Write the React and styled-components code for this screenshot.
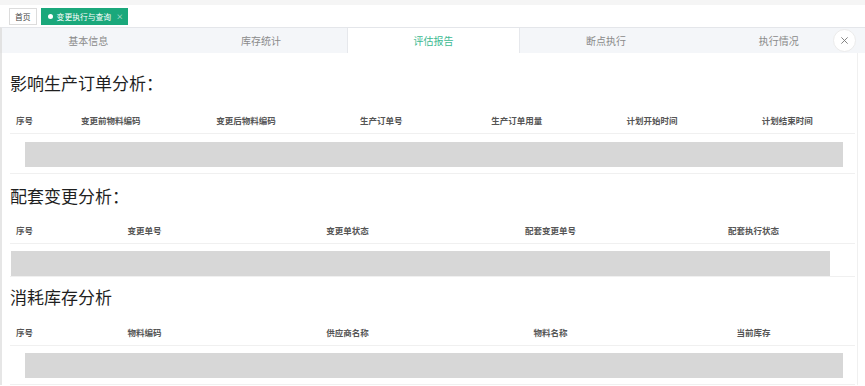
import React from 'react';
import styled, { createGlobalStyle } from 'styled-components';

const GlobalStyle = createGlobalStyle`
  body {
    margin: 0;
    background: #fff;
    font-family: "Noto Sans CJK SC", "Noto Sans", sans-serif;
  }
`;

const TopStrip = styled.div`
  height: 5px;
  background: #f5f5f5;
`;

const TagBar = styled.div`
  display: flex;
  align-items: center;
  gap: 4px;
  height: 22px;
  padding-left: 9px;
  background: #fff;
`;

const Tag = styled.div`
  display: flex;
  align-items: center;
  gap: 4px;
  height: 17px;
  box-sizing: border-box;
  padding: 0 ${({ active }) => (active ? '4px 0 6px' : '5px')};
  font-size: 7.8px;
  color: ${({ active }) => (active ? '#fff' : '#444')};
  background: ${({ active }) => (active ? '#1aa87b' : '#fff')};
  border: 1px solid ${({ active }) => (active ? '#1aa87b' : '#dcdcdc')};
`;

const Dot = styled.span`
  width: 5px;
  height: 5px;
  border-radius: 50%;
  background: #fff;
`;

const TagClose = styled.span`
  font-size: 7px;
  opacity: 0.8;
  margin-left: 1px;
`;

const TabBar = styled.div`
  position: relative;
  display: grid;
  grid-template-columns: repeat(5, 1fr);
  height: 26px;
  background: #f4f6f9;
  border-top: 1px solid #e4e6ea;
  border-left: 2px solid #e2e2e2;
  box-sizing: border-box;
`;

const Tab = styled.div`
  display: flex;
  align-items: center;
  justify-content: center;
  font-size: 10px;
  color: ${({ active }) => (active ? '#3dba92' : '#8a8a8a')};
  background: ${({ active }) => (active ? '#fff' : 'transparent')};
  border-left: 1px solid ${({ active }) => (active ? '#e6e8ec' : 'transparent')};
  border-right: 1px solid ${({ active }) => (active ? '#e6e8ec' : 'transparent')};
`;

const CloseButton = styled.div`
  position: absolute;
  right: 9px;
  top: 1px;
  width: 23px;
  height: 23px;
  border-radius: 50%;
  background: #fff;
  border: 1px solid #ebebeb;
  box-sizing: border-box;
  display: flex;
  align-items: center;
  justify-content: center;
`;

const Body = styled.div`
  display: flex;
`;

const Main = styled.div`
  width: 855px;
  box-sizing: border-box;
  padding-left: 8px;
  border-left: 2px solid #e6e6e6;
`;

const Gutter = styled.div`
  flex: 1;
  border-left: 1px solid #f0f0f0;
  margin-left: 2px;
`;

const Section = styled.section`
  padding-top: ${({ top }) => top}px;
`;

const Title = styled.h2`
  margin: 0;
  font-size: 17px;
  line-height: 24px;
  font-weight: 400;
  color: #1f1f1f;
`;

const HeaderRow = styled.div`
  display: grid;
  grid-template-columns: 33px repeat(${({ cols }) => cols}, 1fr);
  align-items: center;
  height: 26px;
  margin-top: ${({ gap }) => gap}px;
  border-bottom: 1px solid #f0f0f0;
`;

const HeadCell = styled.div`
  font-size: 8.5px;
  font-weight: 700;
  color: #555;
  text-align: ${({ first }) => (first ? 'left' : 'center')};
  padding-left: ${({ first }) => (first ? '6px' : '0')};
`;

const EmptyRow = styled.div`
  padding: ${({ top }) => top}px ${({ right }) => right}px ${({ bottom }) => bottom}px
    ${({ left }) => left}px;
  border-bottom: 1px solid #f0f0f0;
`;

const Placeholder = styled.div`
  height: 25px;
  background: #d7d7d7;
`;

const sections = [
  {
    title: '影响生产订单分析：',
    top: 18,
    gap: 12,
    barTop: 8,
    bottom: 6,
    left: 15,
    right: 12,
    columns: ['变更前物料编码', '变更后物料编码', '生产订单号', '生产订单用量', '计划开始时间', '计划结束时间'],
  },
  {
    title: '配套变更分析：',
    top: 10,
    gap: 9,
    barTop: 7,
    bottom: 0,
    left: 1,
    right: 25,
    columns: ['变更单号', '变更单状态', '配套变更单号', '配套执行状态'],
  },
  {
    title: '消耗库存分析',
    top: 8,
    gap: 10,
    barTop: 7,
    bottom: 6,
    left: 15,
    right: 12,
    columns: ['物料编码', '供应商名称', '物料名称', '当前库存'],
  },
];

const tabs = ['基本信息', '库存统计', '评估报告', '断点执行', '执行情况'];

const App = () => (
  <>
    <GlobalStyle />
    <TopStrip />
    <TagBar>
      <Tag>首页</Tag>
      <Tag active>
        <Dot />
        变更执行与查询
        <TagClose>×</TagClose>
      </Tag>
    </TagBar>
    <TabBar>
      {tabs.map((t) => (
        <Tab key={t} active={t === '评估报告'}>
          {t}
        </Tab>
      ))}
      <CloseButton>
        <svg width="9" height="9" viewBox="0 0 10 10">
          <path d="M1.5 1.5 L8.5 8.5 M8.5 1.5 L1.5 8.5" stroke="#777" strokeWidth="1" />
        </svg>
      </CloseButton>
    </TabBar>
    <Body>
      <Main>
        {sections.map((s) => (
          <Section key={s.title} top={s.top}>
            <Title>{s.title}</Title>
            <HeaderRow cols={s.columns.length} gap={s.gap}>
              <HeadCell first>序号</HeadCell>
              {s.columns.map((c) => (
                <HeadCell key={c}>{c}</HeadCell>
              ))}
            </HeaderRow>
            <EmptyRow top={s.barTop} bottom={s.bottom} left={s.left} right={s.right}>
              <Placeholder />
            </EmptyRow>
          </Section>
        ))}
      </Main>
      <Gutter />
    </Body>
  </>
);

export default App;
